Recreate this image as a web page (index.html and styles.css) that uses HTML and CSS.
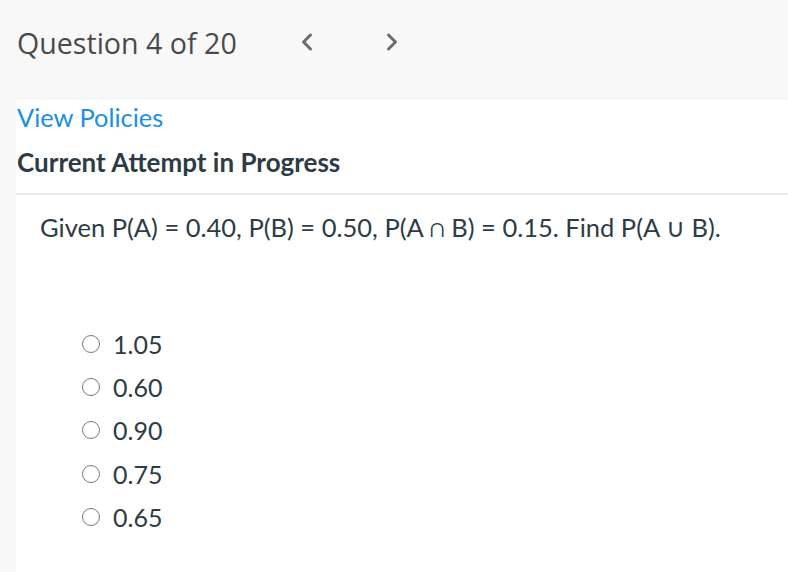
FILE: index.html
```html
<!DOCTYPE html>
<html>
<head>
<meta charset="utf-8">
<link rel="stylesheet" href="styles.css">
</head>
<body>
<header class="topbar">
  <h1 class="title">Question 4 of 20</h1>
  <nav class="nav">
    <button class="navbtn" aria-label="Previous">
      <svg width="14" height="20" viewBox="0 0 14 20"><path d="M10.5 3 L3.5 10 L10.5 17" fill="none" stroke="#6b6b6b" stroke-width="3" stroke-linecap="round" stroke-linejoin="round"/></svg>
    </button>
    <button class="navbtn" aria-label="Next">
      <svg width="14" height="20" viewBox="0 0 14 20"><path d="M3.5 3 L10.5 10 L3.5 17" fill="none" stroke="#6b6b6b" stroke-width="3" stroke-linecap="round" stroke-linejoin="round"/></svg>
    </button>
  </nav>
</header>
<main class="panel">
  <a class="policies" href="#">View Policies</a>
  <h2 class="attempt">Current Attempt in Progress</h2>
  <div class="divider"></div>
  <p class="question">Given P(A) = 0.40, P(B) = 0.50, P(A ∩ B) = 0.15. Find P(A ∪ B).</p>
  <ul class="options">
    <li class="option"><span class="radio"></span><span>1.05</span></li>
    <li class="option"><span class="radio"></span><span>0.60</span></li>
    <li class="option"><span class="radio"></span><span>0.90</span></li>
    <li class="option"><span class="radio"></span><span>0.75</span></li>
    <li class="option"><span class="radio"></span><span>0.65</span></li>
  </ul>
</main>
</body>
</html>
```
FILE: styles.css
```css
html, body {
  margin: 0;
  padding: 0;
  background: #f8f8f8;
  height: 100%;
}
body {
  font-family: Lato, "Open Sans", sans-serif;
  color: #2d3b45;
}
.topbar {
  height: 84px;
  display: flex;
  align-items: center;
  padding-left: 17px;
  margin-bottom: 16px;
}
.title {
  margin: 0;
  font-family: "Open Sans", sans-serif;
  font-weight: 400;
  font-size: 28.6px;
  color: #4a4a4a;
}
.nav {
  display: flex;
  gap: 71px;
  margin-left: 63px;
}
.navbtn {
  background: none;
  border: 0;
  padding: 0;
  width: 14px;
  height: 20px;
  display: flex;
}
.panel {
  margin-left: 16px;
  background: #fff;
  min-height: 472px;
  display: flex;
  flex-direction: column;
}
.policies {
  display: block;
  padding-left: 1px;
  font-size: 25.4px;
  line-height: 34px;
  color: #1a8fe3;
  text-decoration: none;
}
.attempt {
  margin: 11px 0 0;
  padding-left: 1px;
  font-size: 26px;
  line-height: 34px;
  font-weight: 700;
  color: #2d3b45;
}
.divider {
  height: 2px;
  background: #ececec;
  margin-top: 14px;
}
.question {
  margin: 15px 0 0 24px;
  font-size: 25.5px;
  line-height: 34px;
}
.options {
  list-style: none;
  margin: 78px 0 0 66px;
  padding: 0;
}
.option {
  display: flex;
  align-items: center;
  gap: 13px;
  height: 43.3px;
  font-size: 25px;
}
.radio {
  width: 16px;
  height: 16px;
  border: 1.5px solid #7a7a7a;
  border-radius: 50%;
}
```
